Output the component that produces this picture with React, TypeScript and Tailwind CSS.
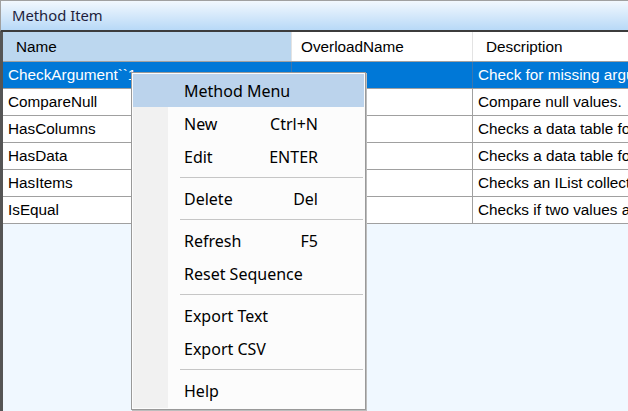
const rows = [
  { name: "CheckArgument``1", desc: "Check for missing arguments.", selected: true },
  { name: "CompareNull", desc: "Compare null values.", selected: false },
  { name: "HasColumns", desc: "Checks a data table for columns.", selected: false },
  { name: "HasData", desc: "Checks a data table for data.", selected: false },
  { name: "HasItems", desc: "Checks an IList collection for items.", selected: false },
  { name: "IsEqual", desc: "Checks if two values are equal.", selected: false },
];

type MenuEntry = { label: string; shortcut?: string } | "sep";

const menu: MenuEntry[] = [
  { label: "New", shortcut: "Ctrl+N" },
  { label: "Edit", shortcut: "ENTER" },
  "sep",
  { label: "Delete", shortcut: "Del" },
  "sep",
  { label: "Refresh", shortcut: "F5" },
  { label: "Reset Sequence" },
  "sep",
  { label: "Export Text" },
  { label: "Export CSV" },
  "sep",
  { label: "Help" },
];

export default function App() {
  return (
    <div className="relative w-[628px] h-[411px] overflow-hidden bg-[#f0f8ff] flex flex-col">
      {/* Title bar */}
      <div className="h-[32px] shrink-0 border-t border-l border-[#a0a0a0] border-b-2 border-b-[#3c3c3c] bg-gradient-to-b from-[#f2f8fe] to-[#b8d9f7] flex items-center pl-[11px] font-['Noto_Sans',sans-serif] text-[14.8px] text-[#1e1e3c] leading-none">
        Method Item
      </div>

      {/* Grid */}
      <div className="flex-1 border-l-[3px] border-[#555] font-['Liberation_Sans',Arial,sans-serif] text-[15.3px] leading-none">
        {/* Header */}
        <div className="flex h-[30px] bg-white border-b border-[#a0a0a0] text-black">
          <div className="w-[289px] shrink-0 bg-[#bcd7ef] border-r border-[#e3e3e3] flex items-center pl-[13px]">Name</div>
          <div className="w-[181px] shrink-0 border-r border-[#e3e3e3] flex items-center pl-[9px]">OverloadName</div>
          <div className="flex-1 flex items-center pl-[13px] whitespace-nowrap">Description</div>
        </div>

        {/* Rows */}
        {rows.map((r) => (
          <div
            key={r.name}
            className={
              r.selected
                ? "flex h-[27px] bg-[#0078d7] text-white border-b border-[#a0a0a0]"
                : "flex h-[27px] bg-white text-black border-b border-[#a0a0a0]"
            }
          >
            <div
              className={
                r.selected
                  ? "w-[289px] shrink-0 border-r border-[#3a76b0] flex items-center pl-[5px] whitespace-nowrap"
                  : "w-[289px] shrink-0 border-r border-[#a0a0a0] flex items-center pl-[5px] whitespace-nowrap"
              }
            >
              {r.name}
            </div>
            <div
              className={
                r.selected
                  ? "w-[181px] shrink-0 border-r border-[#3a76b0]"
                  : "w-[181px] shrink-0 border-r border-[#a0a0a0]"
              }
            />
            <div className="flex-1 flex items-center pl-[5px] whitespace-nowrap overflow-hidden">{r.desc}</div>
          </div>
        ))}
      </div>

      {/* Context menu */}
      <div className="absolute left-[131px] top-[72px] w-[235px] h-[338px] border border-[#999] shadow-[1px_1px_0_#bdbdbd] bg-[#fcfcfc] p-px font-['Noto_Sans',sans-serif] text-[16px] leading-none text-black">
        <div className="h-full bg-[linear-gradient(to_right,#f1f1f1_35px,#fcfcfc_35px)]">
          <div className="h-[33px] bg-[#bbd3ec] flex items-center pl-[51px]">Method Menu</div>
          {menu.map((m, i) =>
            m === "sep" ? (
              <div key={i} className="h-[9px] flex items-center pl-[47px] pr-px">
                <div className="h-px w-full bg-[#c6c6c6]" />
              </div>
            ) : (
              <div key={i} className="h-[33px] flex items-center justify-between pl-[51px] pr-[46px]">
                <span>{m.label}</span>
                {m.shortcut && <span>{m.shortcut}</span>}
              </div>
            )
          )}
        </div>
      </div>
    </div>
  );
}
